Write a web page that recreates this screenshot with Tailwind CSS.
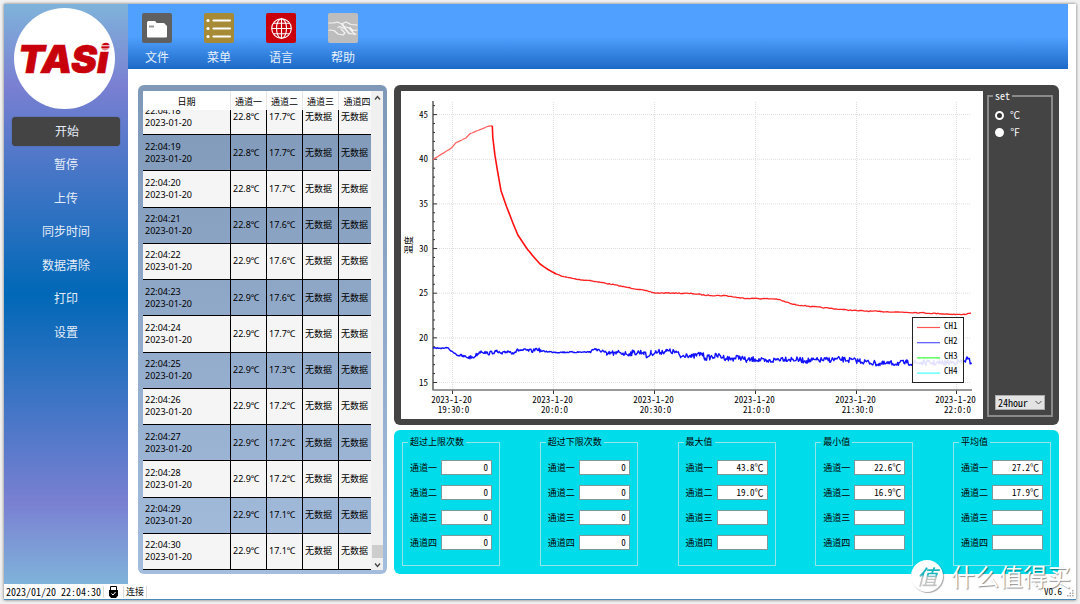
<!DOCTYPE html>
<html lang="zh-CN">
<head>
<meta charset="utf-8">
<title>TASI</title>
<script src="https://cdn.jsdelivr.net/npm/@tailwindcss/browser@4"></script>
</head>
<body class="bg-[#f1f1f1] font-['Noto_Sans','Noto_Sans_CJK_SC',sans-serif] text-[9px] leading-3 text-black">
<div class="flex h-screen p-1">
<div class="relative flex min-w-0 flex-1 flex-col border-b border-[#4a88b8] bg-white shadow-[0_0_3px_rgba(0,0,0,0.55)]">
  <div class="flex min-h-0 flex-1">
    <aside class="flex w-[124px] shrink-0 flex-col items-center bg-[linear-gradient(to_bottom,#7fb3da_0%,#7a80d2_14%,#0068b7_50%,#7a80d2_86%,#7fb3da_100%)] pt-1">
      <div class="mr-[3px] flex size-[101px] items-center justify-center rounded-full bg-white">
        <svg class="w-full" viewBox="0 0 101 101" role="img" aria-label="TASI">
          <text x="4" y="65" fill="#c7000b" stroke="#c7000b" stroke-width=".6" font-family="Inter, 'Liberation Sans', sans-serif" font-size="39" font-weight="900" font-style="italic">TASi</text>
          <path d="M83 37.800H98M83 41H98" stroke="#fff" stroke-width="1"/>
        </svg>
      </div>
      <nav class="mt-2 flex h-[230px] w-full flex-col justify-between px-2 text-xs text-[#e4edf8]" id="nav"></nav>
    </aside>
    <div class="flex min-w-0 flex-1 flex-col">
      <header class="mr-2 flex h-[65px] shrink-0 gap-8 bg-[linear-gradient(to_bottom,#50a0ff_50%,#1d6ac6_100%)] pt-[9px] pl-[14px] text-xs text-[#e6f0fc]">
        <button class="flex w-[30px] flex-col items-center gap-[7px]">
          <svg class="size-[30px] shrink-0" viewBox="0 0 30 30"><rect width="30" height="30" rx="2" fill="#606060"/><path d="M5 9.500q0-1.500 1.500-1.500h6q1 0 1.500 1l.5 1H22l3 3v10.500q0 1-1 1H6q-1 0-1-1z" fill="#fff"/><path d="M7 13.500h5" stroke="#999" stroke-width="2"/></svg>
          <span class="whitespace-nowrap leading-4">文件</span>
        </button>
        <button class="flex w-[30px] flex-col items-center gap-[7px]">
          <svg class="size-[30px] shrink-0" viewBox="0 0 30 30"><rect width="30" height="30" rx="2" fill="#a68a36"/><path d="M9.500 7.500h16.500M9.500 15.500h16.500M9.500 23.500h16.500" stroke="#fff" stroke-width="2.200" stroke-linecap="round"/><g fill="#fff"><circle cx="4" cy="7.500" r="1.600"/><circle cx="4" cy="15.500" r="1.600"/><circle cx="4" cy="23.500" r="1.600"/></g></svg>
          <span class="whitespace-nowrap leading-4">菜单</span>
        </button>
        <button class="flex w-[30px] flex-col items-center gap-[7px]">
          <svg class="size-[30px] shrink-0" viewBox="0 0 30 30"><rect width="30" height="30" rx="2" fill="#c7000b"/><g fill="none" stroke="#fff" stroke-width="1.100"><circle cx="15.500" cy="15.500" r="9.800"/><ellipse cx="15.500" cy="15.500" rx="5" ry="9.800"/><path d="M15.500 5.700v19.600M5.700 15.500h19.600M7.300 10.200h16.400M7.300 20.800h16.400"/></g></svg>
          <span class="whitespace-nowrap leading-4">语言</span>
        </button>
        <button class="flex w-[30px] flex-col items-center gap-[7px]">
          <svg class="size-[30px] shrink-0" viewBox="0 0 30 30"><rect width="30" height="30" rx="2" fill="#bdbdbd"/><g fill="none" stroke="#f4f4f4" stroke-width="1.200" stroke-linejoin="round" stroke-linecap="round"><path d="M1 10h5l3-1 4 1.500 4 4.500 4 5 3 1h4M1 17l5 .5 4 3.500 5 1 2-2-4-4"/><path d="M10 14.500l2-1 5 2.500 4 5M29 12l-6-.5-5-2.500-3.500 1.500 1.500 3 5 1.500 6 6.500M29 17l-4 .5-3-3"/></g></svg>
          <span class="whitespace-nowrap leading-4">帮助</span>
        </button>
      </header>
      <main class="flex min-h-0 flex-1 gap-[7px] pt-4 pr-[17px] pb-2.5 pl-2.5">
        <section class="flex w-[249px] shrink-0 rounded-md bg-linear-to-b from-[#7f98b7] to-[#a5bddd] pt-1.5 pr-1 pb-1 pl-[5px]">
          <div class="w-[228px] shrink-0 overflow-hidden">
            <table class="h-full w-[232px] table-fixed border-separate border-spacing-0">
              <thead class="bg-white">
                <tr class="h-[19px]">
                  <th class="w-[88px] border-r border-[#e5e5e5] p-0 pt-0.5 font-normal">日期</th>
                  <th class="w-9 border-r border-[#e5e5e5] p-0 pt-0.5 font-normal whitespace-nowrap">通道一</th>
                  <th class="w-9 border-r border-[#e5e5e5] p-0 pt-0.5 font-normal whitespace-nowrap">通道二</th>
                  <th class="w-9 border-r border-[#e5e5e5] p-0 pt-0.5 font-normal whitespace-nowrap">通道三</th>
                  <th class="p-0 pt-0.5 font-normal whitespace-nowrap">通道四</th>
                </tr>
              </thead>
              <tbody id="rows"></tbody>
            </table>
          </div>
          <div class="flex flex-1 flex-col items-center justify-between bg-[#f0f0f0] pt-1">
            <svg class="w-[7px]" viewBox="0 0 7 6"><path d="M1 4.500l2.500-3 2.500 3" fill="none" stroke="#444" stroke-width="1.300"/></svg>
            <div class="flex w-full flex-col items-center gap-1">
              <div class="h-[13px] w-[11px] bg-[#cdcdcd]"></div>
              <svg class="mb-0.5 w-[7px]" viewBox="0 0 7 6"><path d="M1 1.500l2.500 3 2.500-3" fill="none" stroke="#444" stroke-width="1.300"/></svg>
            </div>
          </div>
        </section>
        <div class="flex min-w-0 flex-1 flex-col gap-[5px]">
          <section class="flex min-h-0 flex-1 gap-1 rounded-md bg-[#444] py-1.5 pr-1.5 pl-[7px]">
            <svg id="chart" class="h-full min-w-0 flex-1 bg-white" viewBox="401 91 582 328" font-family="'Noto Sans Mono CJK SC','Liberation Mono',monospace" font-size="9"></svg>
            <fieldset class="mb-0.5 flex w-[66px] shrink-0 flex-col justify-between border-2 border-[#8a8a8a] px-1.5 pb-[5px] font-['Noto_Sans_Mono_CJK_SC','Liberation_Mono',monospace] text-[10px] text-white">
              <legend class="-ml-0.5 px-0.5 leading-[10px]">set</legend>
              <div class="flex flex-col gap-[5px] pt-2">
                <label class="flex items-center gap-1.5 leading-3"><input type="radio" name="unit" checked class="size-[9px] appearance-none rounded-full border-2 border-white bg-[#333]">℃</label>
                <label class="flex items-center gap-1.5 leading-3"><input type="radio" name="unit" class="size-[9px] appearance-none rounded-full border-2 border-white bg-white">℉</label>
              </div>
              <div class="relative w-[50px]">
                <select aria-label="时间范围" class="block h-[15px] w-full appearance-none border border-[#adadad] bg-[#e3e3e3] pl-0.5 leading-3 text-black"><option>24hour</option></select>
                <svg class="pointer-events-none absolute top-[5px] right-[3px] w-[7px]" viewBox="0 0 7 6"><path d="M.5 1l3 3 3-3" fill="none" stroke="#555"/></svg>
              </div>
            </fieldset>
          </section>
          <section id="stats" class="flex h-[144px] shrink-0 justify-between rounded-md bg-[#00dcea] px-2 pt-1.5 pb-2"></section>
        </div>
      </main>
    </div>
  </div>
  <footer class="relative z-10 flex h-[15px] shrink-0 items-center pr-[14px] font-['Noto_Sans_Mono_CJK_SC','Liberation_Mono',monospace]">
    <span class="w-[100px] border-r border-[#ddd] pl-0.5 text-[10px] whitespace-nowrap">2023/01/20 22:04:30</span>
    <span class="flex w-5 justify-center border-r border-[#ddd]"><svg class="h-3 w-[9px]" viewBox="0 0 9 12"><path d="M1.500 .5h6v4h-6z" fill="#fff" stroke="#000"/><path d="M0 4h9v5.500L7 12H2L0 9.500z"/><path d="M2.500 7.500l1.500 1.500L6.500 6" fill="none" stroke="#fff"/></svg></span>
    <span class="border-r border-[#ddd] px-0.5">连接</span>
    <span class="ml-auto">V0.6</span>
  </footer>
  <svg class="absolute right-0.5 bottom-0.5 size-[7px]" viewBox="0 0 7 7" fill="#aaa"><path d="M5 0h1.500v1.500H5zM5 2.500h1.500V4H5zM5 5h1.500v1.500H5zM2.500 2.500H4V4H2.500zM2.500 5H4v1.500H2.500zM0 5h1.500v1.500H0z"/></svg>
  <div class="pointer-events-none absolute right-[5px] bottom-[7px] flex items-center gap-2 font-['Noto_Sans_CJK_SC',sans-serif]">
    <div class="flex size-8 items-center justify-center rounded-full bg-white shadow-[1px_1px_1px_rgba(0,0,0,0.35)]"><span class="bg-[linear-gradient(to_bottom,#19b5bf_45%,#c4c4c4_55%)] bg-clip-text px-0.5 text-[21px] leading-8 font-medium text-transparent italic">值</span></div>
    <span class="text-2xl leading-8 whitespace-nowrap text-white [text-shadow:1px_1px_1px_rgba(0,0,0,0.45)]">什么值得买</span>
  </div>
</div>
</div>
<script>
document.getElementById('nav').innerHTML = ['开始', '暂停', '上传', '同步时间', '数据清除', '打印', '设置'].map((t, i) =>
  `<button class="${i ? 'h-[29px] rounded' : 'h-[29px] rounded bg-[#444] pl-0.5 shadow-[0_0_1px_#333]'}">${t}</button>`).join('');

// Readings; the oldest row is partly scrolled out under the header
const log = [['18', '22.8', '17.7'], ['19', '22.8', '17.7'], ['20', '22.8', '17.7'], ['21', '22.8', '17.6'], ['22', '22.9', '17.6'], ['23', '22.9', '17.6'], ['24', '22.9', '17.7'], ['25', '22.9', '17.3'], ['26', '22.9', '17.2'], ['27', '22.9', '17.2'], ['28', '22.9', '17.2'], ['29', '22.9', '17.1'], ['30', '22.9', '17.1']];
const cell = 'border-r border-b border-black p-0 pl-0.5 whitespace-nowrap';
document.getElementById('rows').innerHTML = log.map(([s, a, b], i) => {
  const date = i ? 'block' : 'flex h-6 items-end overflow-hidden pb-[5px]';
  const val = i ? 'block' : 'h-6 pt-px';
  return `<tr class="${i % 2 ? 'h-9' : i ? 'h-9 bg-[#f5f5f5]' : 'h-[25px] bg-[#f5f5f5]'}"><td class="${cell}"><div class="${date}"><p>22:04:${s}<br>2023-01-20</p></div></td>` +
    [a + '℃', b + '℃', '无数据', '无数据'].map(v => `<td class="${cell}"><div class="${val}">${v}</div></td>`).join('') + '</tr>';
}).join('');

const stats = [['超过上限次数', '0', '0', '0', '0'], ['超过下限次数', '0', '0', '0', '0'], ['最大值', '43.8℃', '19.0℃', '', ''], ['最小值', '22.6℃', '16.9℃', '', ''], ['平均值', '27.2℃', '17.9℃', '', '']];
document.getElementById('stats').innerHTML = stats.map(([t, ...v]) =>
  `<fieldset class="flex w-[98px] flex-col border border-[#8ee6ea] px-[7px]"><legend class="px-0.5 leading-3 -ml-0.5">${t}</legend><div class="flex flex-col gap-2.5 pt-3">${v.map((x, i) =>
    `<label class="flex h-[15px] items-center justify-between whitespace-nowrap">通道${'一二三四'[i]}<input readonly value="${x}" class="h-[15px] w-[51px] border border-[#7a9a9c] bg-white pr-[3px] text-right font-['Noto_Sans_Mono_CJK_SC','Liberation_Mono',monospace] text-[9px]"></label>`).join('')}</div></fieldset>`).join('');

// Chart: grid, axes, traces, legend
const yOf = v => 382.5 - (v - 15) * 8.93;
const xs = [452.5, 553.5, 654.5, 755.5, 856.5, 956.5];
const times = ['19:30:0', '20:0:0', '20:30:0', '21:0:0', '21:30:0', '22:0:0'];
let s = '';
for (let v = 15; v <= 45; v += 5) s += `<path d="M433 ${yOf(v)}H971" stroke="#ddd" stroke-dasharray="1 1"/>`;
xs.forEach(x => s += `<path d="M${x} 102V390" stroke="#ddd" stroke-dasharray="1 1"/>`);
for (let v = 15; v <= 46; v++) s += `<path d="M433 ${yOf(v)}h${v % 5 ? 2 : 4}" stroke="#333"/>`;
for (let v = 15; v <= 45; v += 5) s += `<text x="428" y="${yOf(v) + 3}" text-anchor="end">${v}</text>`;
xs.forEach((x, i) => s += `<path d="M${x} 390v4" stroke="#333"/><text x="${x - 1}" y="403" text-anchor="middle">2023-1-20</text><text x="${x + 1}" y="413" text-anchor="middle">${times[i]}</text>`);
s += '<path d="M433 101V390" stroke="#333" stroke-width="1.200"/><path d="M432.500 390H972" stroke="#777" stroke-width="1.500"/>';
s += `<text transform="translate(412 254) rotate(-90)" font-family="'Noto Sans CJK SC',sans-serif">温度</text>`;
let seed = 7;
const rnd = () => (seed = (seed * 16807) % 2147483647) / 2147483647 - 0.5;
function trace(p, amp, step) {
  let d = 'M' + p[0];
  for (let i = 1; i < p.length; i++) {
    const [x0, y0] = p[i - 1], [x1, y1] = p[i];
    for (let x = x0 + step; x < x1; x += step) d += `L${x.toFixed(1)} ${(y0 + (y1 - y0) * (x - x0) / (x1 - x0) + rnd() * amp(x)).toFixed(1)}`;
    d += 'L' + p[i];
  }
  return d;
}
const warm = [[433,159.5],[451,148.3],[456,142.7],[466,138],[470,133.7],[488,126.3],[492.3,125.7]];
const cool = [[492.3,125.7],[492.8,137.5],[495,155.7],[497.7,172],[501,190.7],[506.7,207],[512,220.7],[517.7,234.7],[526,247.3],[532.7,255.7],[540,264],[548,269.5],[556,274]];
const tail = [[556,274],[565,277],[578,279.5],[590,280.5],[610,284],[625,287],[640,289.5],[655,293],[673,293],[693,293.7],[706.7,295.3],[726.7,295.7],[740,298],[776.7,299],[793,304.3],[813,306.7],[840,309.3],[856.7,310.7],[880,311.5],[920,312.7],[940,313.7],[962,314.7],[971,313]];
const blue = [[433,347.7],[439,348.5],[447.7,347.7],[451,351],[459,355.5],[466,357],[473,357.5],[481,351],[487.7,353.5],[496,351.5],[502,354],[507.7,351],[512.7,352.7],[519,350],[533,351],[536.7,348.5],[541,351],[556,352.3],[589,352],[595,348.5],[597,350.7],[602.7,350.7],[606.7,355],[611,352.7],[616,354],[619,351.7],[626,354],[632.7,352.7],[644,352],[647,357.5],[651,353],[666.7,351],[676.7,352.3],[680.7,357],[686.7,354],[691.7,357],[701.7,353.3],[705,358],[718,355.7],[730,359],[740,357],[746.7,360.7],[755,359],[766.7,361.7],[781.7,358.3],[806.7,360.7],[840,359.3],[860,361],[880,364],[906.7,362.7],[940,363],[963,361.7],[967,359],[971.5,362.7]];
s += `<g fill="none" stroke-linejoin="round"><path d="${trace(warm, () => 0.4, 2)}" stroke="#f66" stroke-width="1.300"/><path d="${trace(cool, () => 0.2, 2)}" stroke="#f11" stroke-width="1.600"/><path d="${trace(tail, () => 0.9, 1.5)}" stroke="#f22" stroke-width="1.300"/>`;
s += `<path d="${trace(blue, x => x < 456 ? 0.8 : x > 541 && x < 590 ? 1.3 : x > 605 ? 5.5 : 3.5, 0.8)}" stroke="#11f" stroke-width="1.400"/></g>`;
s += '<rect x="912.500" y="317.500" width="51" height="65" fill="#fff" fill-opacity=".88" stroke="#222"/>';
[['CH1', '#f55'], ['CH2', '#55f'], ['CH3', '#3f3'], ['CH4', '#4ff']].forEach(([n, c], i) =>
  s += `<path d="M917 ${327.5 + i * 15.2}h23" stroke="${c}" stroke-width="1.200"/><text x="944" y="${328.5 + i * 15.2}">${n}</text>`);
document.getElementById('chart').innerHTML = s;
</script>
</body>
</html>
